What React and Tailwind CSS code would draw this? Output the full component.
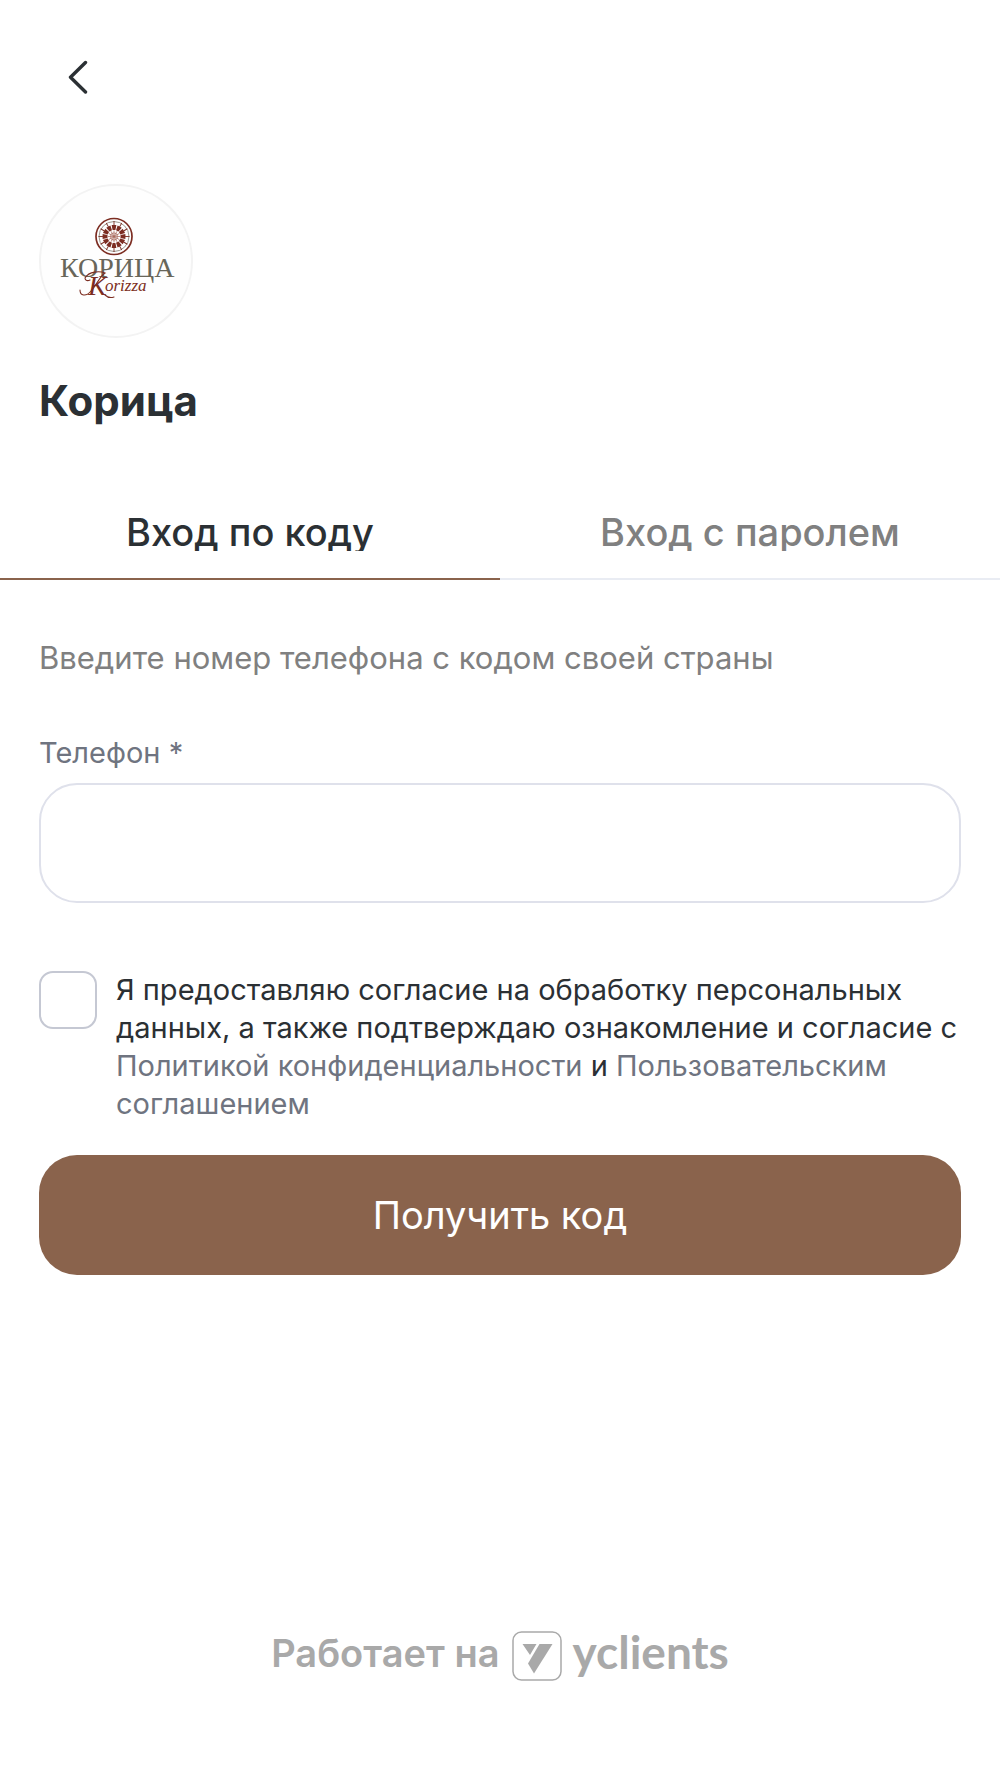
import React, { useState } from 'react'

const PETALS = [0, 30, 60, 90, 120, 150, 180, 210, 240, 270, 300, 330]

const SalonLogo = () => (
  <svg viewBox="0 0 154 154" className="h-full w-full" role="img" aria-label="Корица">
    <circle cx="77" cy="77" r="76" fill="#fefefe" stroke="#f3f3f3" strokeWidth="2" />
    {/* Rosette */}
    <g transform="translate(75 52.5)" fill="none">
      <circle r="18" stroke="#7c2d22" strokeWidth="1.7" />
      <circle r="15" stroke="#8f8a80" strokeWidth="0.9" />
      {PETALS.map((angle) => (
        <g key={angle} transform={`rotate(${angle})`}>
          <path d="M-1.4 -6.5 L-2.4 -11.4 L2.4 -11.4 L1.4 -6.5 Z" fill="#7c2d22" />
          <path d="M0 -15.5 V-11" stroke="#7c2d22" strokeWidth="0.9" />
          <path d="M0 -6 V0" stroke="#a8695d" strokeWidth="0.7" />
        </g>
      ))}
      <circle r="3.6" stroke="#a8695d" strokeWidth="0.7" />
    </g>
    <text x="21" y="93" fontFamily="'Liberation Serif', serif" fontSize="28" fill="#68665a">
      КОРИЦА
    </text>
    {/* Script line with its swashes */}
    <g fill="#7c2d22" fontFamily="'Liberation Serif', serif" fontStyle="italic">
      <text x="49" y="111" fontSize="28">K</text>
      <text x="66" y="107" fontSize="17">orizza</text>
    </g>
    <g fill="none" stroke="#7c2d22" strokeWidth="1.1" strokeLinecap="round">
      <path d="M41 106 C41 112 47 113 52 107 C58 100 62 91 66 89 C61 87 50 87 46 94 C46 97 49 97 51 96" />
      <path d="M66 111 C69 114 72 114 75 113" />
    </g>
  </svg>
)

const Tab = ({ active, onClick, children }) => (
  <button
    type="button"
    role="tab"
    aria-selected={active}
    onClick={onClick}
    className={
      active
        ? 'flex-1 border-b-2 border-[#8a634c] pb-[27px] text-[#2b3034]'
        : 'flex-1 border-b-2 border-[#e9ecf3] pb-[27px] text-[#808080]'
    }
  >
    <span className="block overflow-hidden text-[38px] leading-[38px] font-medium">{children}</span>
  </button>
)

const App = () => {
  const [tab, setTab] = useState('code')

  return (
    <div className="flex min-h-screen flex-col bg-white font-['Inter',sans-serif] text-[#2b3034]">
      {/* Header */}
      <header className="px-[39px] pt-[48px]">
        <button type="button" aria-label="Назад" className="flex h-[58px] w-[77px] items-center justify-center">
          <svg width="20" height="34" viewBox="0 0 20 34" fill="none">
            <path d="M17.5 2.5 L2.5 17.3 L17.5 32" stroke="#2b3034" strokeWidth="3.4" strokeLinecap="round" strokeLinejoin="round" />
          </svg>
        </button>
        <div className="mt-[78px] h-[154px] w-[154px]">
          <SalonLogo />
        </div>
        <h1 className="mt-[38px] text-[42px] leading-[50px] font-bold">Корица</h1>
      </header>

      {/* Tabs */}
      <div role="tablist" className="mt-[87px] flex">
        <Tab active={tab === 'code'} onClick={() => setTab('code')}>Вход по коду</Tab>
        <Tab active={tab === 'password'} onClick={() => setTab('password')}>Вход с паролем</Tab>
      </div>

      {/* Login form */}
      <form className="px-[39px] pt-[58px]" onSubmit={(e) => e.preventDefault()}>
        <p className="text-[31px] leading-[40px] text-[#808080]">Введите номер телефона с кодом своей страны</p>

        <label htmlFor="phone" className="mt-[57px] block text-[29px] leading-[36px] text-[#6f7480]">
          Телефон *
        </label>
        <input
          id="phone"
          type="tel"
          className="mt-[12px] block h-[120px] w-full rounded-[38px] border-2 border-[#dfe1eb] bg-white px-10 text-[38px] outline-none"
        />

        <div className="mt-[68px] flex items-start gap-[19px]">
          <input
            id="agree"
            type="checkbox"
            className="h-[58px] w-[58px] shrink-0 appearance-none rounded-[14px] border-2 border-[#c5c8d3] bg-white checked:bg-[#8a634c]"
          />
          <label htmlFor="agree" className="text-[29px] leading-[38px]">
            Я предоставляю согласие на обработку персональных данных, а также подтверждаю ознакомление и согласие с{' '}
            <a href="#privacy" className="text-[#6f7480]">Политикой конфиденциальности</a> и{' '}
            <a href="#terms" className="text-[#6f7480]">Пользовательским соглашением</a>
          </label>
        </div>

        <button type="submit" className="mt-[32px] h-[120px] w-full rounded-[38px] bg-[#8a634c] text-[38px] text-white">
          Получить код
        </button>
      </form>

      {/* Footer */}
      <footer className="mt-auto flex items-center justify-center pb-[94px] text-[#a9a9a9]">
        <span className="pb-[5px] text-[38px] leading-[50px] font-semibold">Работает на</span>
        <a href="#yclients" className="ml-[12px] flex items-center gap-[11px]">
          <svg width="50" height="50" viewBox="0 0 50 50" fill="currentColor">
            <rect x="1" y="1" width="48" height="48" rx="8.5" fill="none" stroke="currentColor" strokeWidth="1.5" />
            <path d="M10.5 13 H24.5 L21.5 18 L18 24 Z" />
            <path d="M27.5 13 H40.5 L22 42.5 L16 32.5 Z" />
          </svg>
          <span className="pb-[7px] font-['Lato',sans-serif] text-[46px] leading-[50px] font-bold">yclients</span>
        </a>
      </footer>
    </div>
  )
}

export default App
